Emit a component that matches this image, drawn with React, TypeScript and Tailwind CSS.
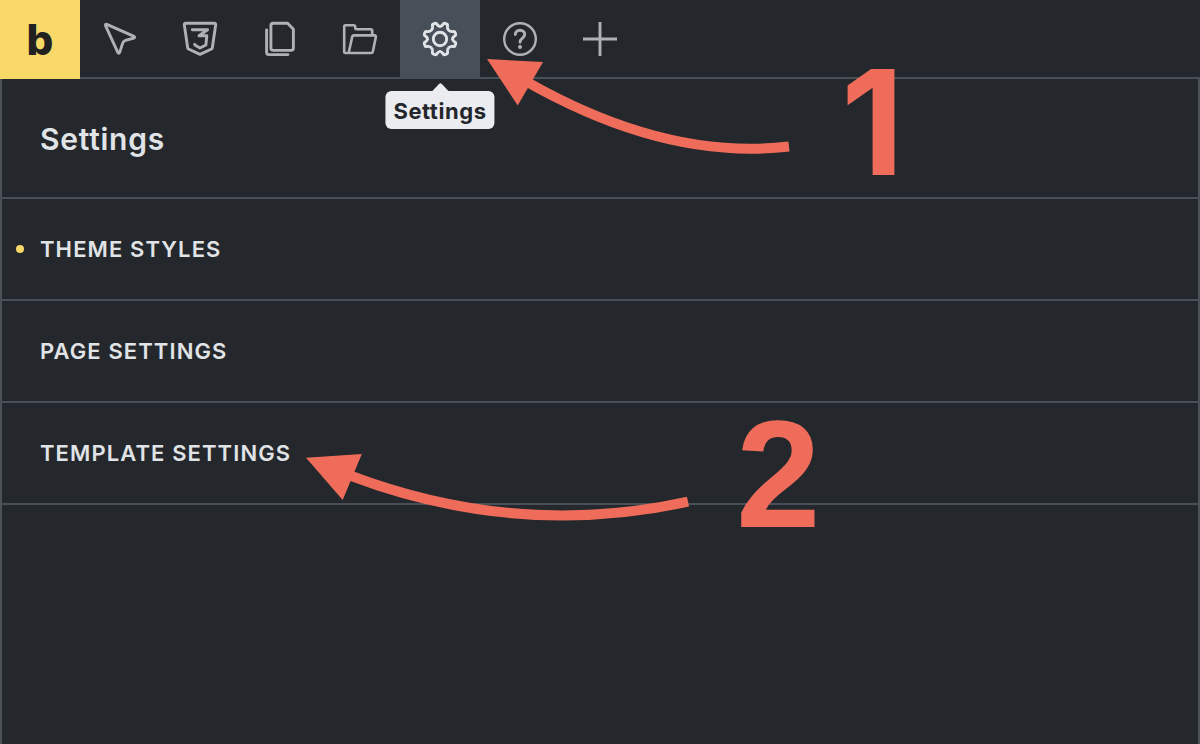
import { useState, type ReactNode } from 'react';
import clsx from 'clsx';

type Tool = {
    id: string;
    label: string;
    icon: ReactNode;
};

// Shared frame for the toolbar icons
const Icon = ({ children }: { children: ReactNode }) => (
    <svg
        viewBox="0 0 38 38"
        className="size-[38px]"
        fill="none"
        stroke="currentColor"
        strokeWidth="2.9"
        strokeLinecap="round"
        strokeLinejoin="round"
        aria-hidden="true"
    >
        {children}
    </svg>
);

// A quarter of the gear outline, rotated four times around the centre
const GEAR_QUARTER =
    'M19 6.4C17.2 6.4 16.8 5.9 16.1 4.5C15.5 3.3 15 3.1 14 3.4L12.6 3.9C11.5 4.3 11.2 4.9 11.5 6C11.9 8 11.7 8.9 10.3 10.3C8.9 11.7 8 11.9 6 11.5C4.9 11.2 4.3 11.5 3.9 12.6L3.4 14C3.1 15 3.3 15.5 4.5 16.1C5.9 16.8 6.4 17.2 6.4 19';

const TOOLS: Tool[] = [
    {
        id: 'edit',
        label: 'Edit',
        icon: (
            <Icon>
                <path d="M5.8 4.4L33 16.4Q34.5 17.3 33 18L24.6 20.3Q22.2 21 21.6 23.4L18.7 32.4Q17.8 34 16.8 32.4L4.5 5.6Q4.2 3.8 5.8 4.4Z" />
            </Icon>
        ),
    },
    {
        id: 'css',
        label: 'CSS',
        icon: (
            <Icon>
                <path d="M4.6 3.3H33.4Q34.9 3.3 34.7 4.8L31.3 28Q31.2 28.7 30.5 29L19 34.4L7.5 29Q6.8 28.7 6.7 28L3.3 4.8Q3.1 3.3 4.6 3.3Z" />
                <path d="M11.3 9.8H26.6L18 15.8H25.8L24.9 25L19 28L14.2 25.2L13.6 24.4" />
            </Icon>
        ),
    },
    {
        id: 'pages',
        label: 'Pages',
        icon: (
            <Icon>
                <path d="M12.2 3.3H26.6L32.4 9.2V28.1Q32.4 30.4 30.1 30.4H12.2Q9.9 30.4 9.9 28.1V5.6Q9.9 3.3 12.2 3.3Z" />
                <path d="M5.6 9.9V32.2Q5.6 34.6 8 34.6H27" />
            </Icon>
        ),
    },
    {
        id: 'templates',
        label: 'Templates',
        icon: (
            <Icon>
                <g strokeWidth="2.6">
                    <path d="M31.2 14.8V10.6Q31.2 9.2 29.8 9.2H15.6Q14.2 9.2 14.2 7.8V6.6Q14.2 5.2 12.8 5.2H4.6Q3.2 5.2 3.2 6.6V31.8Q3.2 33 4.6 33H6.4Q7.7 33 8 31.6L11.2 16.8Q11.5 15.4 12.9 15.4H33.4Q35.2 15.4 34.8 17.2L31.9 31.4Q31.6 33 30 33H5" />
                </g>
            </Icon>
        ),
    },
    {
        id: 'settings',
        label: 'Settings',
        icon: (
            <Icon>
                <path d={GEAR_QUARTER} />
                <path d={GEAR_QUARTER} transform="rotate(90 19 19)" />
                <path d={GEAR_QUARTER} transform="rotate(180 19 19)" />
                <path d={GEAR_QUARTER} transform="rotate(270 19 19)" />
                <circle cx="19" cy="19" r="6.7" />
            </Icon>
        ),
    },
    {
        id: 'help',
        label: 'Help',
        icon: (
            <Icon>
                <circle cx="19" cy="19" r="15.8" strokeWidth="2.4" />
                <path d="M14.3 14.6C14.3 11.8 16.4 10.2 19 10.2C21.6 10.2 23.7 12 23.7 14.5C23.7 18 19 18.2 19 22.2" />
                <circle cx="19" cy="27" r="2" fill="currentColor" stroke="none" />
            </Icon>
        ),
    },
    {
        id: 'add',
        label: 'Add',
        icon: (
            <Icon>
                <path d="M19 2V36M2 19H36" strokeLinecap="butt" />
            </Icon>
        ),
    },
];

const SECTIONS = [
    { id: 'theme', title: 'Theme styles', modified: true },
    { id: 'page', title: 'Page settings', modified: false },
    { id: 'template', title: 'Template settings', modified: false },
];

// Tooltip shown under the active tool
const Tooltip = ({ text }: { text: string }) => (
    <span
        role="tooltip"
        className="absolute top-[91px] left-1/2 z-10 h-[38px] -translate-x-1/2 rounded-md bg-[#ebecf0] px-2 text-[22px] leading-[40px] font-bold tracking-wide text-[#23262a]"
    >
        <svg viewBox="0 0 18 9" className="absolute -top-2 left-1/2 h-[9px] w-[18px] -translate-x-1/2" aria-hidden="true">
            <path d="M0 9L7.6 1Q9 -0.4 10.4 1L18 9Z" fill="#ebecf0" />
        </svg>
        {text}
    </span>
);

// Numbered steps and arrows drawn over the panel
const Annotations = () => (
    <div className="pointer-events-none absolute top-0 left-0 z-20 text-[#ee6c59]">
        <svg viewBox="0 0 840 540" className="h-[540px] w-[840px]" fill="none" aria-hidden="true">
            <path d="M528 82.5Q667 161 789 146.5" stroke="currentColor" strokeWidth="10" />
            <path d="M487 59L543 62L517.7 105.5Z" fill="currentColor" />
            <path d="M350 475.5Q518 539 688 501.7" stroke="currentColor" strokeWidth="10" />
            <path d="M306 457.7L361.8 454L342.7 500Z" fill="currentColor" />
        </svg>
        <span className="absolute top-[48px] left-[841px] text-[146px] leading-[148px] font-bold">1</span>
        <span className="absolute top-[400px] left-[736px] font-['Liberation_Sans',Arial,sans-serif] text-[152px] leading-[148px] font-bold">
            2
        </span>
    </div>
);

export default function App() {
    const [activeTool, setActiveTool] = useState('settings');

    return (
        <div className="relative flex min-h-screen flex-col overflow-hidden bg-[#24282c] font-[Inter,sans-serif] text-[#e1e4e7]">
            {/* Toolbar */}
            <header className="flex h-[79px] border-b-2 border-[#474f59]">
                <a
                    href="#"
                    aria-label="Home"
                    className="-mb-0.5 flex w-20 items-center justify-center bg-[#f8d866] text-[42px] leading-none font-extrabold text-[#212121]"
                >
                    b
                </a>
                {TOOLS.map((tool) => (
                    <button
                        key={tool.id}
                        type="button"
                        aria-label={tool.label}
                        onClick={() => setActiveTool(tool.id)}
                        className={clsx(
                            'relative flex w-20 items-start justify-center pt-5',
                            tool.id === activeTool ? 'bg-[#474f59] text-[#e1e4e7]' : 'text-[#aeb1b5]',
                        )}
                    >
                        {tool.icon}
                        {tool.id === activeTool && <Tooltip text={tool.label} />}
                    </button>
                ))}
            </header>

            {/* Settings panel */}
            <main className="flex-1 border-x-2 border-[#4c5157]">
                <h1 className="flex h-[120px] items-center border-b-2 border-[#474f59] px-[38px] pt-0.5 text-[30px] font-semibold tracking-wide">
                    Settings
                </h1>
                <ul>
                    {SECTIONS.map((section) => (
                        <li key={section.id} className="border-b-2 border-[#474f59]">
                            <button
                                type="button"
                                className="relative flex h-[100px] w-full items-center px-[38px] text-[22px] font-semibold tracking-wider uppercase"
                            >
                                {section.modified && (
                                    <span className="absolute left-3.5 size-2 rounded-full bg-[#f8d866]"></span>
                                )}
                                {section.title}
                            </button>
                        </li>
                    ))}
                </ul>
            </main>

            <Annotations />
        </div>
    );
}
